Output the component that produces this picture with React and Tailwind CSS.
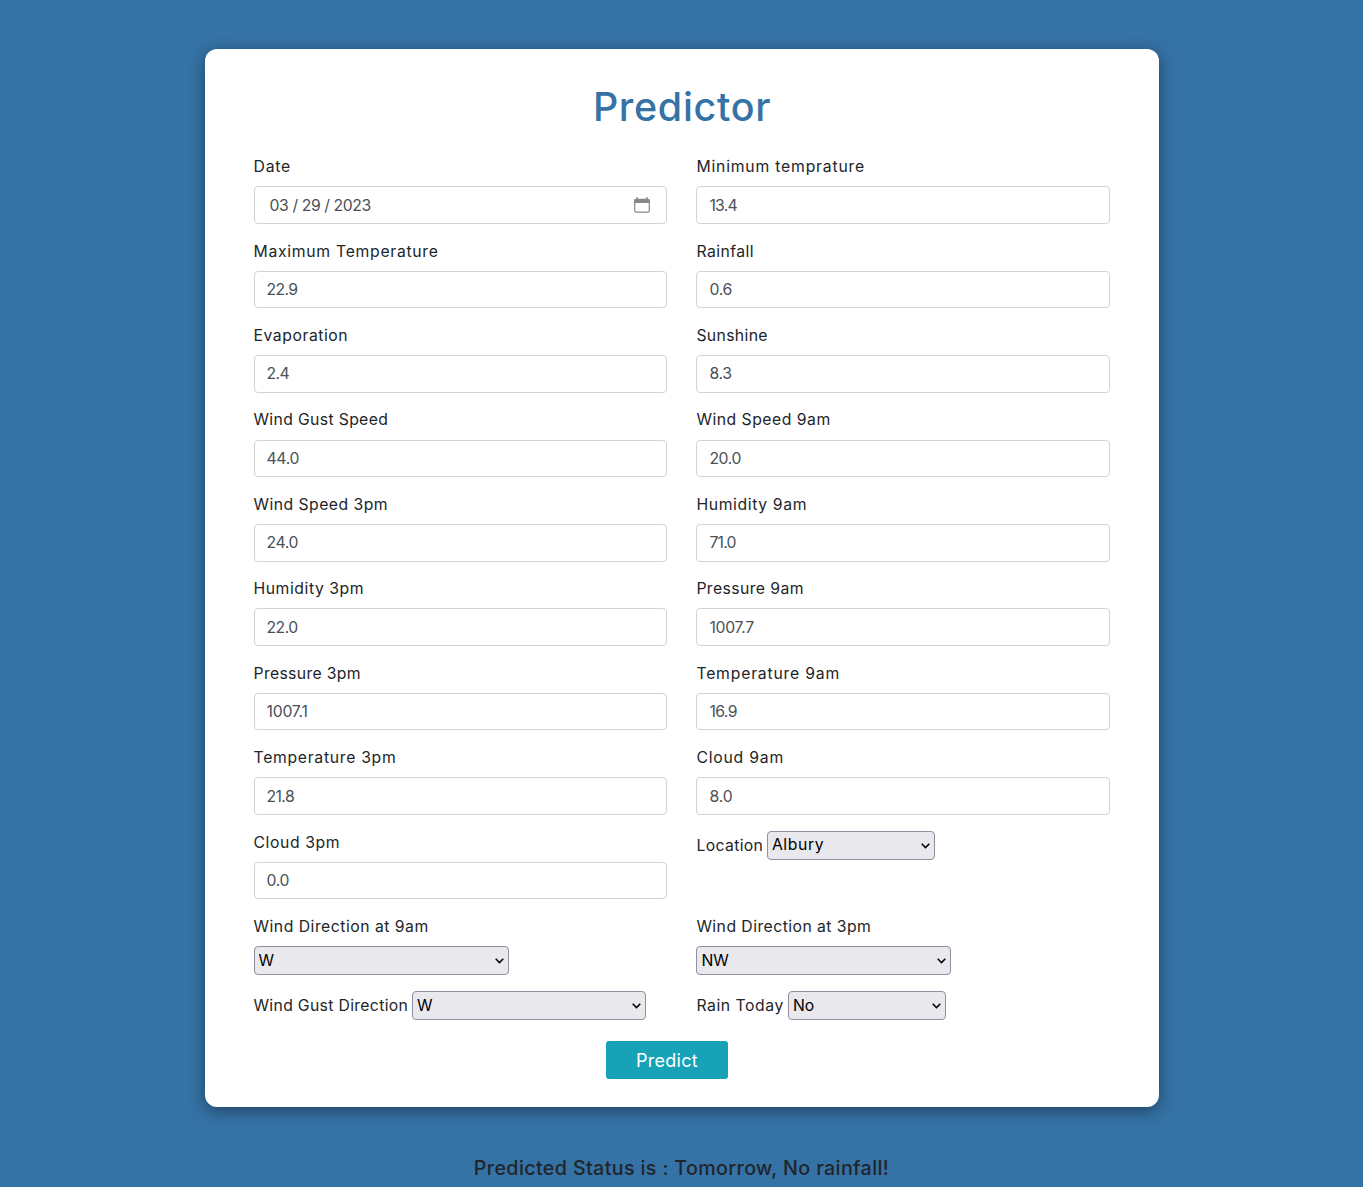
import React from "react";

const fields = [
  ["Date", "03 / 29 / 2023", "tracking-[0.8px]", "tracking-[-0.4px]"],
  ["Minimum temprature", "13.4", "tracking-[0.8px]", "tracking-[-0.75px]"],
  ["Maximum Temperature", "22.9", "tracking-[0.71px]", "tracking-[-0.6px]"],
  ["Rainfall", "0.6", "tracking-[0.45px]", "tracking-[-0.3px]"],
  ["Evaporation", "2.4", "tracking-[0.55px]", "tracking-[-0.6px]"],
  ["Sunshine", "8.3", "tracking-[0.35px]", "tracking-[-0.3px]"],
  ["Wind Gust Speed", "44.0", "tracking-[0.35px]", "tracking-[-0.3px]"],
  ["Wind Speed 9am", "20.0", "tracking-[0.5px]", "tracking-[-0.4px]"],
  ["Wind Speed 3pm", "24.0", "tracking-[0.46px]", "tracking-[-0.4px]"],
  ["Humidity 9am", "71.0", "tracking-[0.62px]", "tracking-[-0.75px]"],
  ["Humidity 3pm", "22.0", "tracking-[0.55px]", "tracking-[-0.5px]"],
  ["Pressure 9am", "1007.7", "tracking-[0.42px]", "tracking-[-0.25px]"],
  ["Pressure 3pm", "1007.1", "tracking-[0.35px]", "tracking-[-0.2px]"],
  ["Temperature 9am", "16.9", "tracking-[0.8px]", "tracking-[-0.6px]"],
  ["Temperature 3pm", "21.8", "tracking-[0.7px]", "tracking-[-0.6px]"],
  ["Cloud 9am", "8.0", "tracking-[0.78px]", "tracking-[-0.1px]"],
  ["Cloud 3pm", "0.0", "tracking-[0.6px]", "tracking-[-0.3px]"],
];

function CalendarIcon() {
  return (
    <svg className="absolute right-[17px] top-[10.5px] h-4 w-4" viewBox="0 0 16 16" fill="none">
      <rect x="0.7" y="2.4" width="14.6" height="12.8" rx="1.6" stroke="#85878b" strokeWidth="1.2" />
      <path d="M0.2 6V3.6Q0.2 1.9 2 1.9H2.3V0.2H4V1.9H12V0.2H13.7V1.9H14Q15.8 1.9 15.8 3.6V6Z" fill="#85878b" />
    </svg>
  );
}

function Field({ label, value, labelClass, valueClass }) {
  const isDate = label === "Date";
  return (
    <div className="h-[84.45px]">
      <label className={`block h-8 pt-[0.8px] leading-6 ${labelClass}`}>{label}</label>
      <div className="relative">
        <input
          readOnly
          value={value}
          className={`block h-[37.5px] w-full rounded-[4px] border border-[#ced4da] bg-white text-[#495057] outline-none ${isDate ? "pl-[15px]" : "pl-3"} ${valueClass}`}
        />
        {isDate && <CalendarIcon />}
      </div>
    </div>
  );
}

function Select({ value, width }) {
  return (
    <div className={`relative h-[29px] shrink-0 ${width}`}>
      <select className={`block h-full w-full appearance-none rounded-[4px] border border-[#8f8f9d] bg-[#e9e9ed] pl-1 text-black outline-none ${value === "Albury" ? "tracking-[0.6px]" : ""}`}>
        <option>{value}</option>
      </select>
      <svg className="pointer-events-none absolute right-[5px] top-[12px] h-[6px] w-[9px]" viewBox="0 0 9 6" fill="none" stroke="#000" strokeWidth="1.5">
        <path d="M0.7 0.8L4.5 4.6L8.3 0.8" />
      </svg>
    </div>
  );
}

export default function App() {
  return (
    <div className="h-[1189px] w-[1366px] bg-white font-[Inter,sans-serif] text-[15.75px] text-[#212529]">
      <div className="flex h-[1187px] w-[1363px] flex-col items-center overflow-hidden bg-[#3572a5] pt-[49px]">
        <main className="ml-px h-[1058px] w-[954px] shrink-0 rounded-[12px] bg-white px-[48.5px] shadow-[0_4px_16px_rgba(0,0,0,0.4)]">
          <h1 className="flex h-[105.3px] items-center justify-center pt-[12px] text-[39.4px] font-medium tracking-[0.7px] text-[#3572a5]">
            Predictor
          </h1>
          <div className="grid grid-cols-[413.5px_413.5px] gap-x-[29.4px]">
            {fields.map(([label, value, labelClass, valueClass]) => (
              <Field key={label} label={label} value={value} labelClass={labelClass} valueClass={valueClass} />
            ))}
            <div className="flex items-start pt-[0.9px]">
              <label className="w-[70.5px] leading-[29px] tracking-[0.35px]">Location</label>
              <Select value="Albury" width="w-[168px]" />
            </div>
            <div className="h-[77px]">
              <label className="block h-8 pt-[0.8px] leading-6 tracking-[0.5px]">Wind Direction at 9am</label>
              <Select value="W" width="w-[255px]" />
            </div>
            <div className="h-[77px]">
              <label className="block h-8 pt-[0.8px] leading-6 tracking-[0.45px]">Wind Direction at 3pm</label>
              <Select value="NW" width="w-[255px]" />
            </div>
            <div className="flex h-[50.2px] items-start">
              <label className="w-[158.5px] whitespace-nowrap leading-[29px] tracking-[0.33px]">Wind Gust Direction</label>
              <Select value="W" width="w-[234px]" />
            </div>
            <div className="flex h-[50.2px] items-start">
              <label className="w-[91.6px] whitespace-nowrap leading-[29px] tracking-[0.55px]">Rain Today</label>
              <Select value="No" width="w-[158px]" />
            </div>
          </div>
          <button className="ml-[352.5px] block h-[38px] w-[122px] rounded-[3px] bg-[#17a2b8] pt-px text-[18px] tracking-[0.25px] text-white">
            Predict
          </button>
        </main>
        <p className="mt-[46px] text-[19.7px] font-medium leading-[30px] tracking-[0.36px]">
          Predicted Status is : Tomorrow, No rainfall!
        </p>
      </div>
    </div>
  );
}
